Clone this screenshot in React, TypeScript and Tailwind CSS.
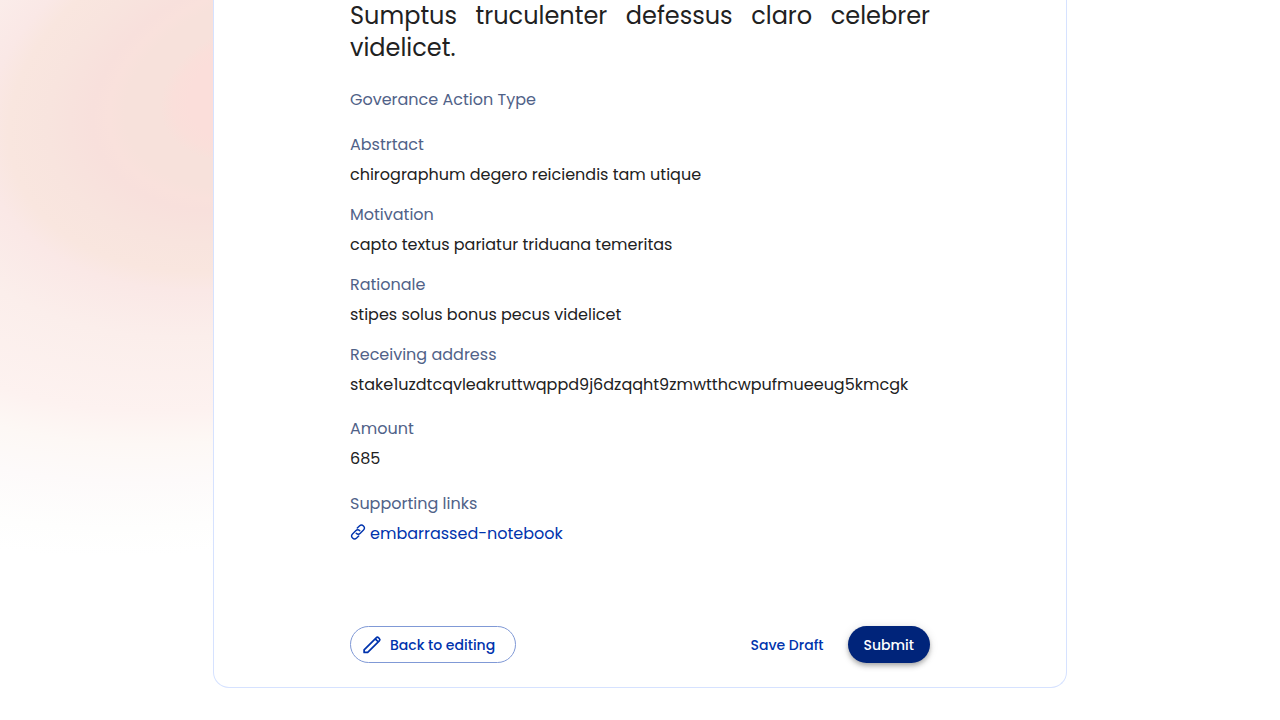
const details = [
  { label: "Goverance Action Type", value: "", gap: "mb-[21px]" },
  { label: "Abstrtact", value: "chirographum degero reiciendis tam utique", gap: "mb-4" },
  { label: "Motivation", value: "capto textus pariatur triduana temeritas", gap: "mb-4" },
  { label: "Rationale", value: "stipes solus bonus pecus videlicet", gap: "mb-4" },
  {
    label: "Receiving address",
    value: "stake1uzdtcqvleakruttwqppd9j6dzqqht9zmwtthcwpufmueeug5kmcgk",
    gap: "mb-5",
  },
  { label: "Amount", value: "685", gap: "mb-[21px]" },
];

function Glow() {
  return (
    <svg className="absolute top-0 left-0 -z-10" width="640" height="720" viewBox="0 0 640 720" aria-hidden="true">
      <defs>
        <radialGradient
          id="glow"
          gradientUnits="userSpaceOnUse"
          cx="0"
          cy="0"
          r="1"
          gradientTransform="translate(260 90) rotate(-18) scale(661 441)"
        >
          <stop offset="0.11" stopColor="#fbdeda" />
          <stop offset="0.135" stopColor="#fadfda" />
          <stop offset="0.155" stopColor="#f7e1db" />
          <stop offset="0.21" stopColor="#f7e1db" />
          <stop offset="0.235" stopColor="#f9e1dc" />
          <stop offset="0.26" stopColor="#f8e0dc" />
          <stop offset="0.33" stopColor="#f8e4de" />
          <stop offset="0.39" stopColor="#f9e6df" />
          <stop offset="0.43" stopColor="#fae8e6" />
          <stop offset="0.53" stopColor="#fbeeeb" />
          <stop offset="0.69" stopColor="#fdf2f0" />
          <stop offset="0.76" stopColor="#fdf8f5" />
          <stop offset="0.84" stopColor="#fdfafa" />
          <stop offset="0.94" stopColor="#fefefd" />
          <stop offset="1" stopColor="#ffffff" />
        </radialGradient>
      </defs>
      <rect width="640" height="720" fill="url(#glow)" />
    </svg>
  );
}

function LinkIcon() {
  return (
    <svg className="mb-1" width="16" height="16" viewBox="0 0 16 16" fill="none" stroke="currentColor" strokeWidth="1.4" strokeLinecap="round" aria-hidden="true">
      <path d="M6.2 9.3a2.9 2.9 0 0 0 4.1 0l3.2-3.2a2.9 2.9 0 0 0-4.1-4.1l-2.1 2.1" />
      <path d="M9.8 6.7a2.9 2.9 0 0 0-4.1 0l-3.2 3.2a2.9 2.9 0 0 0 4.1 4.1l2.1-2.1" />
    </svg>
  );
}

function PencilIcon() {
  return (
    <svg width="20" height="20" viewBox="0 0 20 20" fill="none" stroke="currentColor" strokeWidth="1.7" strokeLinejoin="round" aria-hidden="true">
      <path d="M2.1 17.4v-2.5L14.2 2.8a1.7 1.7 0 0 1 2.4 0l.7.7a1.7 1.7 0 0 1 0 2.4L5.7 17.4zM13.2 3.8l3.2 3.2" />
    </svg>
  );
}

export default function App() {
  return (
    <main className="relative isolate min-h-screen overflow-hidden bg-white font-[Poppins,Inter,sans-serif] text-base text-[#212121]">
      <Glow />
      <section className="mx-auto w-2/3 rounded-b-2xl border border-t-0 border-[#d6e2ff] bg-white px-6 pb-6">
        <div className="mx-auto max-w-[580px]">
          <h1 className="mb-6 text-justify text-2xl leading-8">
            Sumptus truculenter defessus claro celebrer videlicet.
          </h1>
          <dl>
            {details.map(({ label, value, gap }) => (
              <div key={label} className={gap}>
                <dt className="leading-6 text-[#506288]">{label}</dt>
                {value && <dd className="mt-1.5 leading-6">{value}</dd>}
              </div>
            ))}
          </dl>
          <h2 className="leading-6 text-[#506288]">Supporting links</h2>
          <a href="#notebook" className="mt-1.5 flex items-center gap-1 leading-6 text-[#0033ad]">
            <LinkIcon />
            embarrassed-notebook
          </a>
          <div className="mt-20 flex items-center justify-between text-sm font-medium text-[#0033ad]">
            <button type="button" className="flex h-[37px] items-center gap-2 rounded-full border border-[#8099d6] pr-5 pl-[11px] leading-5">
              <PencilIcon />
              Back to editing
            </button>
            <div className="flex gap-2">
              <button type="button" className="h-[37px] rounded-full px-4">
                Save Draft
              </button>
              <button
                type="button"
                className="h-[37px] rounded-full bg-[#00247a] px-4 text-white shadow-[0_2px_4px_-1px_rgba(0,0,0,0.2),0_4px_5px_rgba(0,0,0,0.14),0_1px_10px_rgba(0,0,0,0.12)]"
              >
                Submit
              </button>
            </div>
          </div>
        </div>
      </section>
    </main>
  );
}
